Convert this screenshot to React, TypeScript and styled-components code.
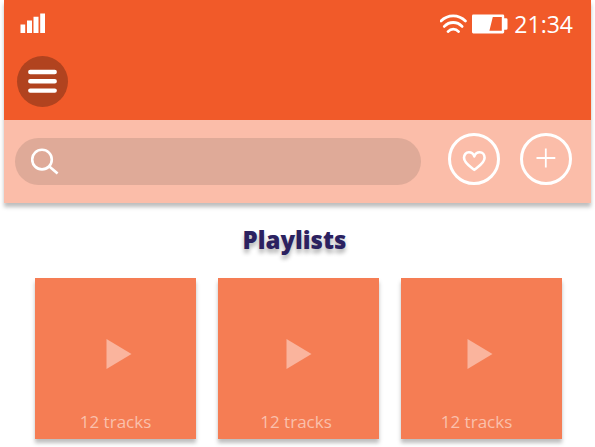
import React from "react";
import styled, { createGlobalStyle } from "styled-components";

const GlobalStyle = createGlobalStyle`
  *, *::before, *::after { box-sizing: border-box; }
  body {
    margin: 0;
    background: #ffffff;
    font-family: "Open Sans", "Noto Sans", sans-serif;
    overflow-x: hidden;
  }
`;

const Top = styled.div`
  margin: 0 4px;
  box-shadow: 0 4px 4px rgba(0, 0, 0, 0.26);
`;

const Header = styled.header`
  height: 120px;
  padding: 0 18px 0 13px;
  background: #f15a29;
`;

const StatusBar = styled.div`
  display: flex;
  align-items: center;
  height: 47px;
  padding-left: 3px;
  color: #ffffff;
`;

const StatusGroup = styled.div`
  display: flex;
  align-items: center;
  gap: 4px;
  margin-left: auto;
`;

const Time = styled.time`
  margin-left: 2px;
  font-size: 23px;
  line-height: 32px;
`;

const Icon = styled.svg`
  display: block;
  flex: none;
`;

const MenuButton = styled.button`
  display: grid;
  place-items: center;
  width: 51px;
  height: 51px;
  margin-top: 9px;
  padding: 0;
  border: 0;
  border-radius: 50%;
  background: #b1431f;
`;

const Toolbar = styled.div`
  display: flex;
  align-items: flex-end;
  gap: 20px;
  padding: 13px 19px 18px 11px;
  background: #fbbda9;
`;

const SearchBox = styled.label`
  display: flex;
  flex: 1;
  align-items: center;
  gap: 8px;
  min-width: 0;
  height: 47px;
  margin-right: 7px;
  padding: 0 16px;
  border-radius: 24px;
  background: #dfaa98;
`;

const SearchInput = styled.input`
  flex: 1;
  min-width: 0;
  padding: 0;
  border: 0;
  outline: 0;
  background: transparent;
  color: #ffffff;
  font: inherit;
`;

const RoundButton = styled.button`
  display: grid;
  flex: none;
  place-items: center;
  width: 52px;
  height: 52px;
  padding: 0;
  border: 3px solid #ffffff;
  border-radius: 50%;
  background: transparent;
`;

const Title = styled.h1`
  margin: 21px 0 0;
  padding-right: 6px;
  color: #2b2160;
  font-size: 24px;
  font-weight: 800;
  line-height: 32px;
  text-align: center;
  text-shadow: 0 4px 4px rgba(0, 0, 0, 0.3);
`;

const Grid = styled.div`
  display: grid;
  grid-template-columns: repeat(3, 1fr);
  gap: 22px;
  padding: 22px 33px 8px 35px;
`;

const Card = styled.button<{ $trail: number }>`
  display: flex;
  flex-direction: column;
  align-items: center;
  justify-content: space-between;
  aspect-ratio: 1;
  min-width: 0;
  padding: 61px ${(p) => p.$trail}px 5px 0;
  border: 0;
  background: #f57d54;
  box-shadow: 0 4px 4px rgba(0, 0, 0, 0.26);
  color: #fac0ac;
  font-family: inherit;
`;

const Tracks = styled.span`
  font-size: 17px;
  font-weight: 400;
  line-height: 24px;
`;

const SignalIcon = () => (
  <Icon width="26" height="22" viewBox="0 0 26 22" fill="#fff" aria-hidden="true">
    <path d="M.5 11.5h4.7V20H.5zM7 7.6h5V20H7zM13.5 3.8h5V20h-5zM20.2.4H25V20h-4.8z" />
  </Icon>
);

const WifiIcon = () => (
  <Icon width="28" height="20" viewBox="0 0 28 20" fill="none" stroke="#fff" strokeWidth="2.8" strokeLinecap="round" aria-hidden="true">
    <path d="M1 7C7.8.2 18.6.2 25.4 7" />
    <path d="M4.3 12.4c5-5.2 12.8-5.2 17.8 0" />
    <path d="M8 17.6c3-3.2 7.6-3.2 10.6 0" />
  </Icon>
);

const BatteryIcon = () => (
  <Icon width="36" height="20" viewBox="0 0 36 20" aria-hidden="true">
    <path
      fill="#fff"
      fillRule="evenodd"
      d="M1.2.6h29.7q1.3 0 1.3 1.3v2.4h2q1.3 0 1.3 1.3v8.8q0 1.3-1.3 1.3h-2v2.4q0 1.3-1.3 1.3H1.2q-1.2 0-1.2-1.3V1.9Q0 .6 1.2.6zM20.8 3 17.4 16.8h12.4V3z"
    />
  </Icon>
);

const MenuIcon = () => (
  <Icon width="31" height="25" viewBox="0 0 31 25" stroke="#fff" strokeWidth="4.4" strokeLinecap="round" aria-hidden="true">
    <path d="M3.3 3h24.4M3.3 12.3h24.4M3.3 21.6h24.4" />
  </Icon>
);

const SearchIcon = () => (
  <Icon width="28" height="28" viewBox="0 0 28 28" fill="none" stroke="#fff" strokeWidth="2.6" aria-hidden="true">
    <circle cx="11" cy="11.6" r="9.8" />
    <path d="M18 18.2 26.6 25.6" />
  </Icon>
);

const HeartIcon = () => (
  <Icon width="24" height="26" viewBox="0 0 24 26" fill="none" stroke="#fff" strokeWidth="2.6" strokeLinejoin="round" aria-hidden="true">
    <path d="M12.3 23.8C8.8 21 2 17.2 2 11.8c0-3.2 2-5.6 4.9-5.6 2.6 0 4.5 1.6 5.4 4.2.9-2.6 2.8-4.2 5.4-4.2 2.9 0 4.9 2.4 4.9 5.6 0 5.4-6.8 9.2-10.3 12z" />
  </Icon>
);

const PlusIcon = () => (
  <Icon width="20" height="22" viewBox="0 0 20 22" stroke="#fff" strokeWidth="1.8" aria-hidden="true">
    <path d="M.5 10h18.8M9.8.5v19" />
  </Icon>
);

const PlayIcon = () => (
  <Icon width="32" height="30" viewBox="0 0 32 30" fill="#fab49d" aria-hidden="true">
    <path d="M6.5 0 31.5 15 6.5 30z" />
  </Icon>
);

const playlists = [
  { id: 1, tracks: 12, trail: 0 },
  { id: 2, tracks: 12, trail: 5 },
  { id: 3, tracks: 12, trail: 10 },
];

export default function App() {
  return (
    <>
      <GlobalStyle />
      <Top>
        <Header>
          <StatusBar>
            <SignalIcon />
            <StatusGroup>
              <WifiIcon />
              <BatteryIcon />
              <Time>21:34</Time>
            </StatusGroup>
          </StatusBar>
          <MenuButton type="button" aria-label="Menu">
            <MenuIcon />
          </MenuButton>
        </Header>
        <Toolbar>
          <SearchBox>
            <SearchIcon />
            <SearchInput type="search" aria-label="Search" />
          </SearchBox>
          <RoundButton type="button" aria-label="Favourites">
            <HeartIcon />
          </RoundButton>
          <RoundButton type="button" aria-label="Add">
            <PlusIcon />
          </RoundButton>
        </Toolbar>
      </Top>
      <main>
        <Title>Playlists</Title>
        <Grid>
          {playlists.map((p) => (
            <Card key={p.id} type="button" $trail={p.trail}>
              <PlayIcon />
              <Tracks>{p.tracks} tracks</Tracks>
            </Card>
          ))}
        </Grid>
      </main>
    </>
  );
}
